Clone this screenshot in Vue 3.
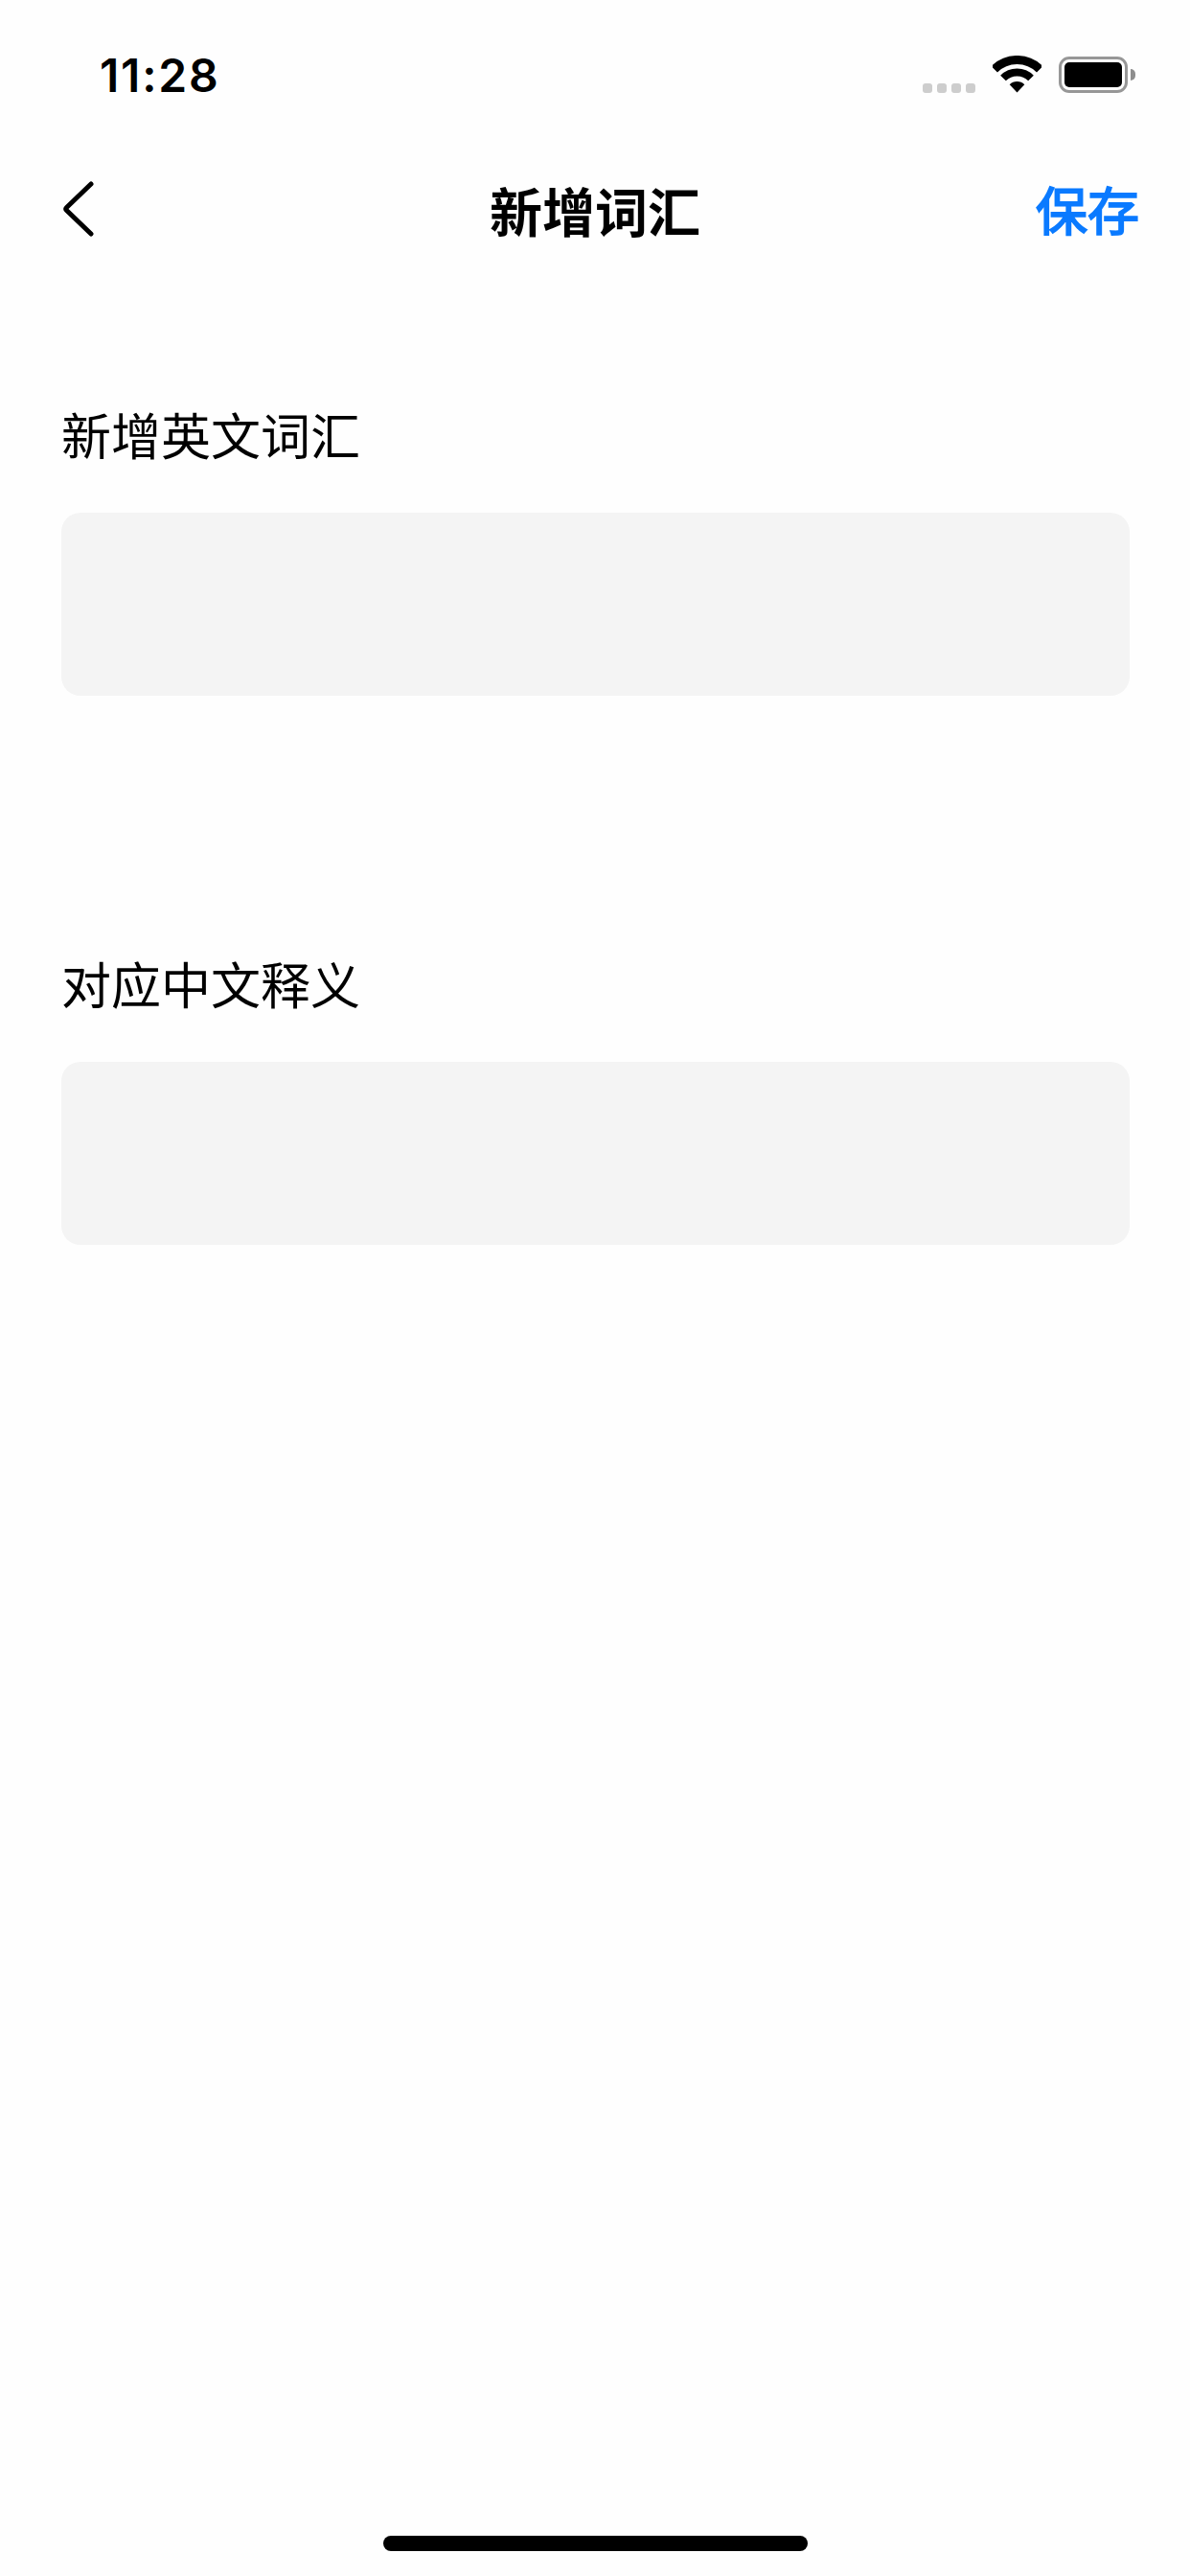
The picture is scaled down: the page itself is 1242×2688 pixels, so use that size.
<script setup>
const fields = [
  { label: '新增英文词汇' },
  { label: '对应中文释义' },
]
</script>

<template>
  <div class="page">
    <header class="status">
      <span class="time">11:28</span>
      <div class="indicators">
        <div class="dots"><i></i><i></i><i></i><i></i></div>
        <svg class="wifi" width="51" height="39" viewBox="0 0 51 39" fill="none">
          <path d="M1.8 14.3A33.5 33.5 0 0 1 49.2 14.3" stroke="#000" stroke-width="9" />
          <path d="M11 23.5A20.5 20.5 0 0 1 40 23.5" stroke="#000" stroke-width="8" />
          <path d="M25.5 38.5L17.7 30.2A11 11 0 0 1 33.3 30.2Z" fill="#000" />
        </svg>
        <div class="battery">
          <div class="battery-body"><div class="battery-fill"></div></div>
          <div class="battery-nub"></div>
        </div>
      </div>
    </header>

    <nav class="nav">
      <svg class="back" width="34" height="60" viewBox="0 0 34 60" fill="none">
        <path d="M30 4L4.5 28.5Q3 30 4.5 31.5L30 56" stroke="#000" stroke-width="5" stroke-linecap="round" stroke-linejoin="round" />
      </svg>
      <h1 class="title">新增词汇</h1>
      <span class="save">保存</span>
    </nav>

    <main class="form">
      <section v-for="field in fields" :key="field.label" class="field">
        <label class="label">{{ field.label }}</label>
        <div class="input"></div>
      </section>
    </main>

    <div class="home-area"><div class="home-bar"></div></div>
  </div>
</template>

<style scoped>
.page {
  width: 1242px;
  height: 2688px;
  background: #fefefe;
  display: flex;
  flex-direction: column;
  font-family: "Noto Sans CJK SC", "Noto Sans", sans-serif;
  color: #000;
  overflow: hidden;
}
.status {
  height: 178px;
  box-sizing: border-box;
  padding: 51px 57px 0 104px;
  display: flex;
  justify-content: space-between;
  align-items: flex-start;
}
.time {
  font-family: Inter, sans-serif;
  font-size: 48px;
  font-weight: 600;
  letter-spacing: 1.8px;
  line-height: 56px;
}
.indicators {
  display: flex;
  align-items: flex-start;
  margin-top: 7px;
}
.dots {
  display: flex;
  gap: 5px;
  margin-top: 29px;
  margin-right: 18px;
}
.dots i {
  width: 10px;
  height: 10px;
  border-radius: 3px;
  background: #cdcdcd;
}
.wifi {
  margin-right: 18px;
}
.battery {
  display: flex;
  align-items: center;
  height: 38px;
  margin-top: 1px;
}
.battery-body {
  width: 72px;
  height: 38px;
  box-sizing: border-box;
  border: 3px solid #979797;
  border-radius: 11px;
  padding: 3px 3px;
}
.battery-fill {
  height: 100%;
  background: #000;
  border-radius: 5px;
}
.battery-nub {
  width: 5px;
  height: 12px;
  margin-left: 3px;
  background: #8e8e8e;
  border-radius: 0 6px 6px 0;
}
.nav {
  height: 80px;
  box-sizing: border-box;
  padding: 0 53px 0 65px;
  display: grid;
  grid-template-columns: 1fr auto 1fr;
  align-items: center;
}
.back {
  justify-self: start;
}
.title {
  margin: 0;
  font-size: 55px;
  font-weight: 700;
  line-height: 80px;
  transform: translateX(-6px);
}
.save {
  justify-self: end;
  font-size: 54px;
  font-weight: 400;
  -webkit-text-stroke: 1.8px #0a7aff;
  line-height: 80px;
  color: #0a7aff;
}
.form {
  display: flex;
  flex-direction: column;
  gap: 262px;
  padding: 157px 63px 0 64px;
}
.field {
  display: flex;
  flex-direction: column;
}
.label {
  font-size: 52px;
  font-weight: 400;
  line-height: 76px;
  margin-bottom: 44px;
}
.input {
  height: 191px;
  background: #f4f4f4;
  border-radius: 20px;
}
.home-area {
  margin-top: auto;
  height: 42px;
  display: flex;
  justify-content: center;
}
.home-bar {
  width: 443px;
  height: 16px;
  border-radius: 8px;
  background: #000;
}
</style>

<style>
html, body { margin: 0; background: #fefefe; }
</style>
